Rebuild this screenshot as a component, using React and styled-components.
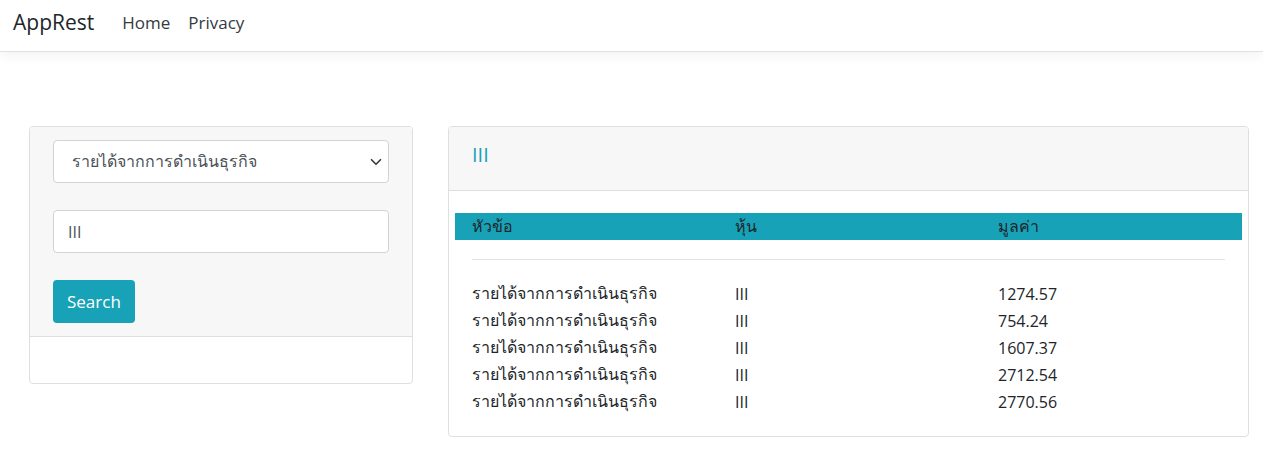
import styled, { createGlobalStyle } from "styled-components";

const rows = [
  { topic: "รายได้จากการดำเนินธุรกิจ", stock: "III", value: "1274.57" },
  { topic: "รายได้จากการดำเนินธุรกิจ", stock: "III", value: "754.24" },
  { topic: "รายได้จากการดำเนินธุรกิจ", stock: "III", value: "1607.37" },
  { topic: "รายได้จากการดำเนินธุรกิจ", stock: "III", value: "2712.54" },
  { topic: "รายได้จากการดำเนินธุรกิจ", stock: "III", value: "2770.56" },
];

const App = () => {
  return (
    <>
      <GlobalStyle />
      <Navbar>
        <Brand>AppRest</Brand>
        <NavLink>Home</NavLink>
        <NavLink>Privacy</NavLink>
      </Navbar>
      <Main>
        <SearchCard>
          <SearchBody>
            <SelectBox>
              <span>รายได้จากการดำเนินธุรกิจ</span>
              <svg width="12" height="12" viewBox="0 0 16 16">
                <path
                  d="M2 5l6 6 6-6"
                  fill="none"
                  stroke="#343a40"
                  strokeWidth="2.2"
                  strokeLinecap="round"
                  strokeLinejoin="round"
                />
              </svg>
            </SelectBox>
            <TextInput defaultValue="III" />
            <Button>Search</Button>
          </SearchBody>
          <SearchFooter />
        </SearchCard>
        <ResultCard>
          <ResultHeader>III</ResultHeader>
          <ResultBody>
            <HeadRow>
              <Cell>หัวข้อ</Cell>
              <Cell>หุ้น</Cell>
              <Cell>มูลค่า</Cell>
            </HeadRow>
            <Divider />
            <Rows>
              {rows.map((r, i) => (
                <Row key={i}>
                  <Cell>{r.topic}</Cell>
                  <Cell>{r.stock}</Cell>
                  <Cell>{r.value}</Cell>
                </Row>
              ))}
            </Rows>
          </ResultBody>
        </ResultCard>
      </Main>
    </>
  );
};

const GlobalStyle = createGlobalStyle`
  body {
    margin: 0;
    background: #fff;
    color: #212529;
    font-family: "Open Sans", "Noto Sans", sans-serif;
    font-size: 16px;
  }
`;

const Navbar = styled.nav`
  display: flex;
  align-items: center;
  height: 51px;
  padding: 0 13px;
  border-bottom: 1px solid #dee2e6;
  box-shadow: 0 4px 12px rgba(0, 0, 0, 0.05);
`;

const Brand = styled.div`
  font-size: 21px;
  color: #212529;
  margin-right: 28px;
  margin-top: -7px;
`;

const NavLink = styled.div`
  font-size: 17px;
  color: #343a40;
  margin-right: 18px;
  margin-top: -6px;
`;

const Main = styled.main`
  display: flex;
  align-items: flex-start;
  gap: 35px;
  padding: 74px 14px 0 29px;
`;

const Card = styled.div`
  border: 1px solid #dfdfdf;
  border-radius: 4px;
  overflow: hidden;
  background: #fff;
`;

const SearchCard = styled(Card)`
  width: 384px;
  box-sizing: border-box;
  flex-shrink: 0;
`;

const SearchBody = styled.div`
  background: #f7f7f7;
  padding: 13px 23px 13px 23px;
  display: flex;
  flex-direction: column;
  align-items: flex-start;
  gap: 27px;
  border-bottom: 1px solid #dfdfdf;
`;

const SearchFooter = styled.div`
  height: 46px;
`;

const FieldBase = styled.div`
  width: 100%;
  height: 43px;
  flex-shrink: 0;
  box-sizing: border-box;
  border: 1px solid #ced4da;
  border-radius: 4px;
  background: #fff;
  font-size: 16px;
  color: #495057;
`;

const SelectBox = styled(FieldBase)`
  display: flex;
  align-items: center;
  justify-content: space-between;
  padding: 0 6px 0 18px;
`;

const TextInput = styled(FieldBase).attrs({ as: "input" })`
  padding: 0 14px;
  font-family: inherit;
  outline: none;
`;

const Button = styled.button`
  height: 43px;
  flex-shrink: 0;
  padding: 0 14px;
  border: none;
  border-radius: 4px;
  background: #17a2b8;
  color: #fff;
  font-family: inherit;
  font-size: 17px;
`;

const ResultCard = styled(Card)`
  flex: 1;
  height: 311px;
  box-sizing: border-box;
`;

const ResultHeader = styled.div`
  background: #f7f7f7;
  border-bottom: 1px solid #dfdfdf;
  height: 64px;
  box-sizing: border-box;
  padding: 14px 23px;
  color: #17a2b8;
  font-size: 20px;
`;

const ResultBody = styled.div`
  padding: 22px 6px 0 6px;
`;

const HeadRow = styled.div`
  display: grid;
  grid-template-columns: 263px 263px 1fr;
  align-items: center;
  height: 27px;
  padding-left: 17px;
  background: #17a2b8;
  color: #212529;
  font-size: 16px;
`;

const Divider = styled.hr`
  margin: 19px 17px 0 17px;
  border: none;
  border-top: 1px solid #e3e3e3;
`;

const Rows = styled.div`
  padding: 20px 0 0 17px;
`;

const Row = styled.div`
  display: grid;
  grid-template-columns: 263px 263px 1fr;
  height: 27px;
  align-items: center;
  font-size: 16px;
  color: #212529;
`;

const Cell = styled.div`
  white-space: nowrap;
`;

export default App;
